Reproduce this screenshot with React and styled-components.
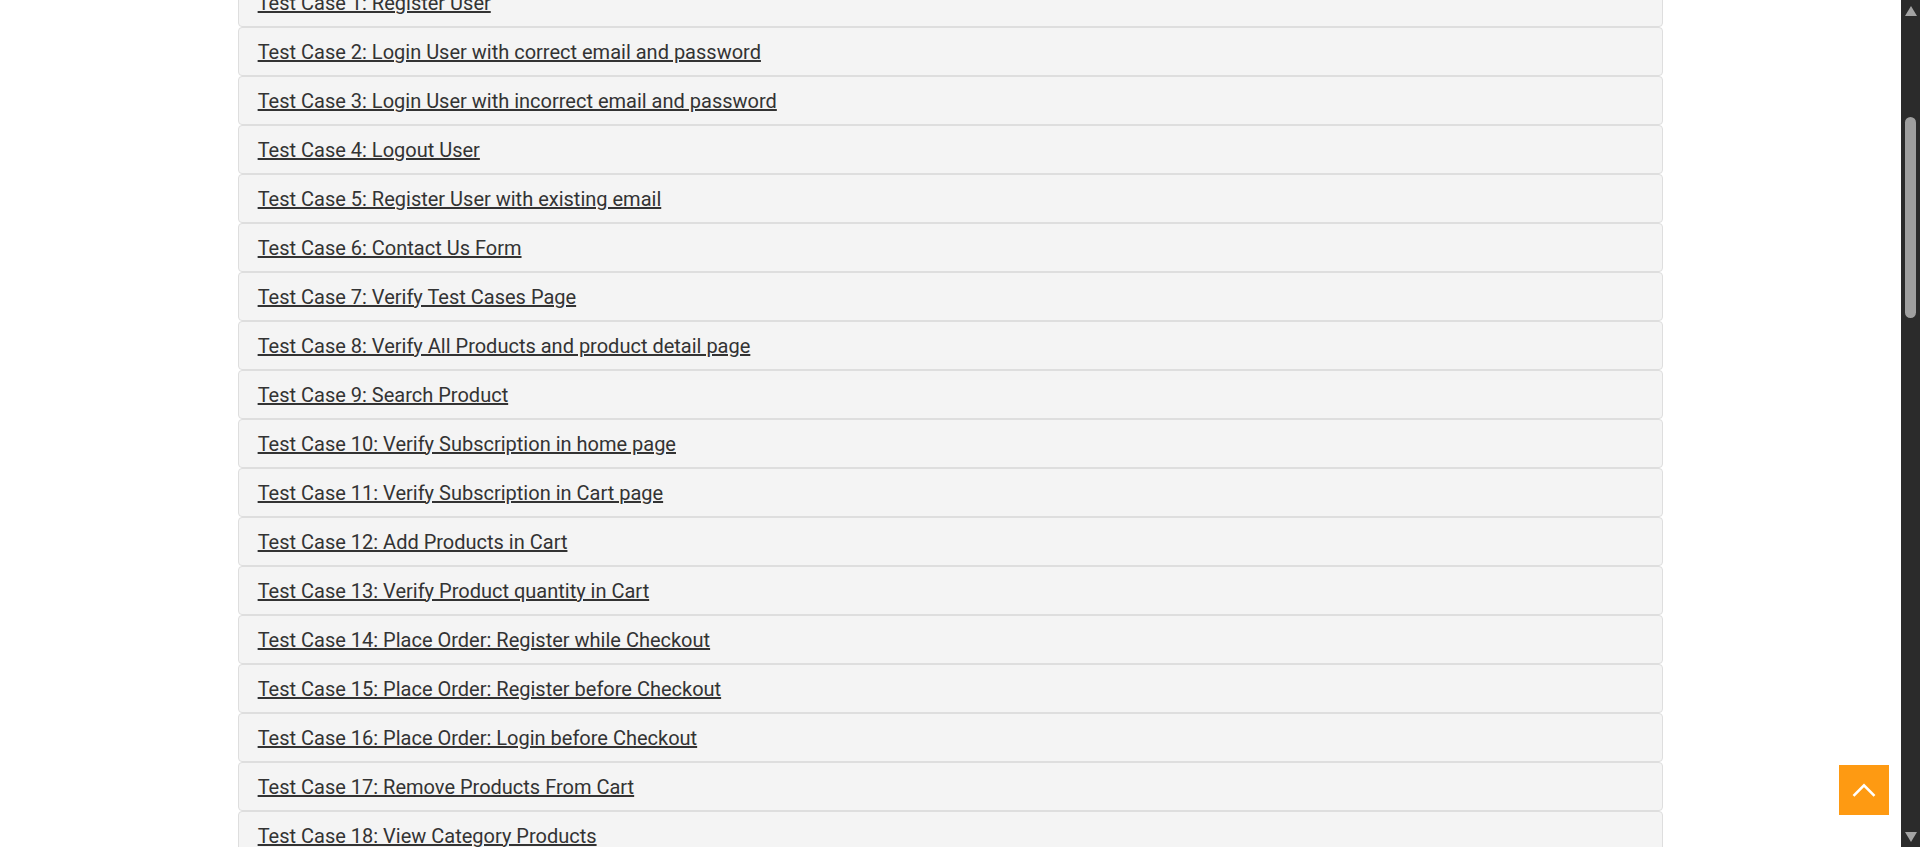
import React, { useLayoutEffect, useRef } from "react";
import styled, { createGlobalStyle } from "styled-components";

const GlobalStyle = createGlobalStyle`
	html, body {
		margin: 0;
		padding: 0;
		background: #ffffff;
		overflow: hidden;
	}
	body {
		font-family: Roboto, "Liberation Sans", sans-serif;
		color: #333333;
	}
	* {
		box-sizing: border-box;
	}
`;

const Viewport = styled.div`
	position: relative;
	display: flex;
	height: 100vh;
	width: 100vw;
`;

const Scroller = styled.div`
	flex: 1;
	height: 100%;
	overflow: hidden;
`;

const Header = styled.header`
	height: 150px;
	display: flex;
	align-items: center;
	justify-content: space-between;
	width: 75%;
	margin: 0 auto;
`;

const Logo = styled.div`
	font-size: 28px;
	font-weight: 700;
	color: #fe980f;
`;

const Nav = styled.nav`
	display: flex;
	gap: 24px;
	font-size: 16px;
	color: #696763;
`;

const TitleBlock = styled.section`
	height: 241px;
	display: flex;
	flex-direction: column;
	align-items: center;
	justify-content: center;
	gap: 12px;
`;

const Title = styled.h2`
	margin: 0;
	font-size: 28px;
	font-weight: 400;
	color: #fe980f;
	text-transform: uppercase;
`;

const SubTitle = styled.p`
	margin: 0;
	font-size: 16px;
	color: #696763;
`;

const List = styled.div`
	width: 75%;
	margin: 0 auto;
	display: flex;
	flex-direction: column;
`;

const Panel = styled.div`
	height: 49px;
	display: flex;
	align-items: center;
	padding: 0 19px;
	background: #f4f4f4;
	border: 1px solid #dedede;
	border-radius: 4px;
`;

const CaseLink = styled.a`
	font-size: 20px;
	color: #333333;
	text-decoration: underline;
	text-decoration-thickness: 1.5px;
	cursor: pointer;
`;

const Footer = styled.footer`
	height: 1744px;
	display: flex;
	flex-direction: column;
	justify-content: flex-end;
	align-items: center;
	padding-bottom: 40px;
	font-size: 14px;
	color: #696763;
`;

const ScrollUp = styled.a`
	position: absolute;
	right: 31px;
	bottom: 32px;
	width: 50px;
	height: 50px;
	background: #fe9a12;
	display: flex;
	align-items: center;
	justify-content: center;
	cursor: pointer;
`;

const ScrollBar = styled.div`
	width: 19px;
	height: 100%;
	background: #2b2b2b;
	display: flex;
	flex-direction: column;
`;

const ArrowButton = styled.div`
	height: 20px;
	display: flex;
	justify-content: center;
	align-items: ${(p) => (p.$down ? "flex-end" : "flex-start")};
	padding: ${(p) => (p.$down ? "0 0 5px 1px" : "6px 0 0 1px")};

	&::before {
		content: "";
		width: 0;
		height: 0;
		border-left: 6px solid transparent;
		border-right: 6px solid transparent;
		${(p) =>
			p.$down
				? "border-top: 10px solid #a3a3a3;"
				: "border-bottom: 10px solid #a3a3a3;"}
	}
`;

const Track = styled.div`
	flex: 1;
	padding: 97px 4px 0 4px;
`;

const Thumb = styled.div`
	height: 201px;
	border-radius: 6px;
	background: #9f9f9f;
`;

const cases = [
	"Register User",
	"Login User with correct email and password",
	"Login User with incorrect email and password",
	"Logout User",
	"Register User with existing email",
	"Contact Us Form",
	"Verify Test Cases Page",
	"Verify All Products and product detail page",
	"Search Product",
	"Verify Subscription in home page",
	"Verify Subscription in Cart page",
	"Add Products in Cart",
	"Verify Product quantity in Cart",
	"Place Order: Register while Checkout",
	"Place Order: Register before Checkout",
	"Place Order: Login before Checkout",
	"Remove Products From Cart",
	"View Category Products",
	"View & Cart Brand Products",
	"Search Products and Verify Cart After Login",
	"Add review on product",
	"Add to cart from Recommended items",
	"Verify address details in checkout page",
	"Download Invoice after purchase order",
	"Verify Scroll Up using 'Arrow' button and Scroll Down functionality",
	"Verify Scroll Up without 'Arrow' button and Scroll Down functionality",
];

const App = () => {
	const scrollerRef = useRef(null);

	useLayoutEffect(() => {
		if (scrollerRef.current) scrollerRef.current.scrollTop = 413;
	}, []);

	return (
		<Viewport>
			<GlobalStyle />
			<Scroller ref={scrollerRef}>
				<Header>
					<Logo>AutomationExercise</Logo>
					<Nav>
						<span>Home</span>
						<span>Products</span>
						<span>Cart</span>
						<span>Signup / Login</span>
						<span>Test Cases</span>
						<span>API Testing</span>
						<span>Video Tutorials</span>
						<span>Contact us</span>
					</Nav>
				</Header>
				<TitleBlock>
					<Title>Test Cases</Title>
					<SubTitle>Below is the list of test Cases for you to practice the Automation.</SubTitle>
				</TitleBlock>
				<List>
					{cases.map((name, i) => (
						<Panel key={i}>
							<CaseLink>{`Test Case ${i + 1}: ${name}`}</CaseLink>
						</Panel>
					))}
				</List>
				<Footer>Copyright © 2021 All rights reserved</Footer>
			</Scroller>
			<ScrollBar>
				<ArrowButton />
				<Track>
					<Thumb />
				</Track>
				<ArrowButton $down />
			</ScrollBar>
			<ScrollUp>
				<svg width="24" height="14" viewBox="0 0 24 14">
					<polyline
						points="1.5,12.8 12,2.3 22.5,12.8"
						fill="none"
						stroke="#ffffff"
						strokeWidth="2.6"
					/>
				</svg>
			</ScrollUp>
		</Viewport>
	);
};

export default App;
